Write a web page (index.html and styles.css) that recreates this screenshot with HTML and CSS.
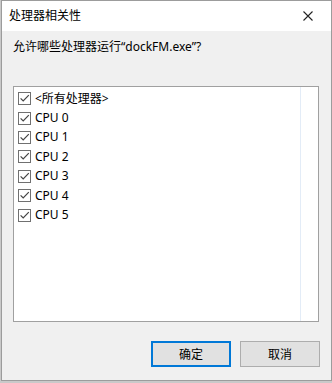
FILE: index.html
```html
<!DOCTYPE html>
<html lang="zh-CN">
<head>
<meta charset="utf-8">
<title>处理器相关性</title>
<link rel="stylesheet" href="styles.css">
</head>
<body>
<div class="window">
  <div class="titlebar">
    <span class="title">处理器相关性</span>
    <span class="close">
      <svg width="10" height="10" viewBox="0 0 10 10"><path d="M0.5 0.5L9.5 9.5M9.5 0.5L0.5 9.5" stroke="#222" stroke-width="1.1" fill="none"/></svg>
    </span>
  </div>
  <div class="content">
    <div class="prompt">允许哪些处理器运行“dockFM.exe”?</div>
    <div class="list">
      <div class="column">
        <div class="item"><span class="cb"><svg width="11" height="11" viewBox="0 0 11 11"><path d="M1.6 5.4L4.2 8L9.8 2.2" stroke="#444" stroke-width="1.2" fill="none"/></svg></span><span>&lt;所有处理器&gt;</span></div>
        <div class="item"><span class="cb"><svg width="11" height="11" viewBox="0 0 11 11"><path d="M1.6 5.4L4.2 8L9.8 2.2" stroke="#444" stroke-width="1.2" fill="none"/></svg></span><span>CPU 0</span></div>
        <div class="item"><span class="cb"><svg width="11" height="11" viewBox="0 0 11 11"><path d="M1.6 5.4L4.2 8L9.8 2.2" stroke="#444" stroke-width="1.2" fill="none"/></svg></span><span>CPU 1</span></div>
        <div class="item"><span class="cb"><svg width="11" height="11" viewBox="0 0 11 11"><path d="M1.6 5.4L4.2 8L9.8 2.2" stroke="#444" stroke-width="1.2" fill="none"/></svg></span><span>CPU 2</span></div>
        <div class="item"><span class="cb"><svg width="11" height="11" viewBox="0 0 11 11"><path d="M1.6 5.4L4.2 8L9.8 2.2" stroke="#444" stroke-width="1.2" fill="none"/></svg></span><span>CPU 3</span></div>
        <div class="item"><span class="cb"><svg width="11" height="11" viewBox="0 0 11 11"><path d="M1.6 5.4L4.2 8L9.8 2.2" stroke="#444" stroke-width="1.2" fill="none"/></svg></span><span>CPU 4</span></div>
        <div class="item"><span class="cb"><svg width="11" height="11" viewBox="0 0 11 11"><path d="M1.6 5.4L4.2 8L9.8 2.2" stroke="#444" stroke-width="1.2" fill="none"/></svg></span><span>CPU 5</span></div>
      </div>
    </div>
    <div class="buttons">
      <button class="btn default">确定</button>
      <button class="btn">取消</button>
    </div>
  </div>
</div>
</body>
</html>
```
FILE: styles.css
```css
html, body {
  margin: 0;
  padding: 0;
}
body {
  background: #c9c9c9;
  font-family: "Noto Sans", "Noto Sans CJK SC", sans-serif;
  font-size: 12px;
  color: #000;
  width: 332px;
  height: 383px;
  overflow: hidden;
}
.window {
  box-sizing: border-box;
  width: 331px;
  height: 381px;
  margin-left: 1px;
  border: 1px solid #9c9c9c;
  display: flex;
  flex-direction: column;
  background: #f0f0f0;
}
.titlebar {
  height: 30px;
  flex: none;
  background: #fff;
  display: flex;
  align-items: center;
  justify-content: space-between;
  padding-left: 7px;
}
.title {
  font-size: 12px;
  line-height: 16px;
}
.close {
  width: 46px;
  height: 30px;
  display: flex;
  align-items: center;
  justify-content: center;
}
.content {
  flex: 1;
  padding: 8px 10px 0 11px;
  display: flex;
  flex-direction: column;
}
.prompt {
  line-height: 16px;
  height: 16px;
}
.list {
  margin-top: 31px;
  box-sizing: border-box;
  width: 306px;
  height: 236px;
  background: #fff;
  border: 1px solid #a0a0a0;
  display: flex;
}
.column {
  box-sizing: border-box;
  width: 287px;
  border-right: 1px solid #e3ecf7;
  padding-top: 2px;
}
.item {
  height: 19.4px;
  display: flex;
  align-items: center;
  padding-left: 4px;
  line-height: 16px;
}
.cb {
  box-sizing: border-box;
  width: 13px;
  height: 13px;
  border: 1px solid #707070;
  margin-right: 4px;
  display: flex;
  align-items: center;
  justify-content: center;
  background: #fff;
}
.cb svg {
  display: block;
}
.buttons {
  margin-top: 19px;
  display: flex;
  justify-content: flex-end;
  gap: 9px;
  padding-right: 1px;
}
.btn {
  box-sizing: border-box;
  width: 80px;
  height: 26px;
  background: #e1e1e1;
  border: 1px solid #adadad;
  font-family: "Noto Sans", "Noto Sans CJK SC", sans-serif;
  font-size: 12px;
  color: #000;
  padding: 0;
  margin: 0;
}
.btn.default {
  border: 1px solid #0078d7;
  box-shadow: inset 0 0 0 1px #0078d7;
}
```
